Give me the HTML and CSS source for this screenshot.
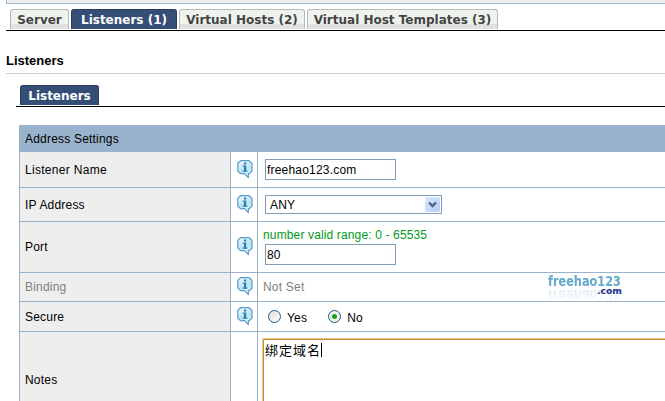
FILE: index.html
```
<!DOCTYPE html>
<html lang="en">
<head>
<meta charset="utf-8">
<title>Listeners</title>
<link rel="stylesheet" href="styles.css">
</head>
<body>
<svg class="defs" width="0" height="0">
  <defs>
    <linearGradient id="bubble" x1="0" y1="0" x2="0.3" y2="1">
      <stop offset="0" stop-color="#eefaff"/><stop offset="0.6" stop-color="#b9e3f7"/><stop offset="1" stop-color="#e3f6fe"/>
    </linearGradient>
    <symbol id="info" viewBox="0 0 16 19">
      <path d="M3.500 .7h8.500L15 3.500v7.500l-2.500 2.700h-1.200v4L7.500 13.700H3.500L.8 11V3.500z" fill="url(#bubble)" stroke="#5a9dc8" stroke-width="1.200" stroke-linejoin="round"/>
      <path d="M7 2.500h2.200v2H7zM5.800 5.600h3.400v5h1.200v1.200H5.600v-1.200H7v-3.800H5.800z" fill="#347eab"/>
    </symbol>
  </defs>
</svg>
<div class="topbox"></div>
<nav class="tabs">
  <a class="tab server"><span>Server</span></a>
  <a class="tab listeners active"><span>Listeners (1)</span></a>
  <a class="tab hosts"><span>Virtual Hosts (2)</span></a>
  <a class="tab templates"><span>Virtual Host Templates (3)</span></a>
</nav>
<h1>Listeners</h1>
<nav class="tabs subtabs"><a class="tab sub active"><span>Listeners</span></a></nav>
<main class="settings">
  <h2>Address Settings</h2>
  <div class="row name">
    <div class="label">Listener Name</div>
    <div class="help"><svg><use href="#info"/></svg></div>
    <div class="value"><div class="field">freehao123.com</div></div>
  </div>
  <div class="row address">
    <div class="label">IP Address</div>
    <div class="help"><svg><use href="#info"/></svg></div>
    <div class="value"><div class="field select"><span>ANY</span><i><svg viewBox="0 0 15 15"><path d="M4 5.500l3.500 3.500L11 5.500" fill="none" stroke="#4d6185" stroke-width="2.400"/></svg></i></div></div>
  </div>
  <div class="row port">
    <div class="label">Port</div>
    <div class="help"><svg><use href="#info"/></svg></div>
    <div class="value"><div class="hint">number valid range: 0 - 65535</div><div class="field">80</div></div>
  </div>
  <div class="row binding">
    <div class="label">Binding</div>
    <div class="help"><svg><use href="#info"/></svg></div>
    <div class="value">Not Set</div>
  </div>
  <div class="row secure">
    <div class="label">Secure</div>
    <div class="help"><svg><use href="#info"/></svg></div>
    <div class="value"><i class="radio"></i><span class="yes">Yes</span><i class="radio on"></i><span>No</span></div>
  </div>
  <div class="row notes">
    <div class="label">Notes</div>
    <div class="help"></div>
    <div class="value"><div class="area">绑定域名<i class="caret"></i></div></div>
  </div>
</main>
<div class="watermark">
  <svg class="brand" width="80" height="18"><text x="3" y="15" textLength="73" lengthAdjust="spacingAndGlyphs">freehao123</text></svg>
  <svg class="com" width="28" height="11"><text x="1" y="9" textLength="25" lengthAdjust="spacingAndGlyphs">.com</text></svg>
</div>
</body>
</html>
```
FILE: styles.css
```
* { box-sizing: border-box; }
html, body { margin: 0; height: 401px; }
body {
  position: relative;
  background: #fff;
  color: #000;
  font: 12px/16px "Liberation Sans", Arial, "Noto Sans CJK SC", sans-serif;
  letter-spacing: .2px;
}
.defs { display: block; }
.topbox {
  height: 4px;
  margin-left: 6px;
  background: #eee;
  border: solid #9ab3cd;
  border-width: 0 0 1px 1px;
}
.tabs {
  display: flex;
  gap: 2px;
  height: 22px;
  margin: 5px 0 0 6px;
  padding-left: 4px;
  border-bottom: 1px solid #000;
}
.tab {
  height: 20px;
  display: flex;
  justify-content: center;
  border: 1px solid #b9b9b9;
  border-bottom: 0;
  border-radius: 3px 3px 0 0;
  background: linear-gradient(#eff3ed 0, #eff3ed 14px, #dfe0df 14px, #e1e2e0 100%);
  color: #444;
  font: bold 12px/20px "DejaVu Sans", Verdana, sans-serif;
  letter-spacing: 0;
  white-space: nowrap;
}
.active { background: #344e75; border-color: #263d5e; color: #fff; }
.server { width: 59px; }
.listeners { width: 106px; }
.hosts { width: 126px; }
.templates { width: 191px; }
.sub { width: 79px; }
h1 {
  margin: 21px 0 0 6px;
  height: 22px;
  border-bottom: 1px solid #ccc;
  font-size: 13px;
  line-height: 17px;
  letter-spacing: 0;
}
.subtabs { margin: 11px 0 0 16px; }
.settings { margin: 18px 0 0 19px; border-left: 1px solid #9ab3cd; }
h2 {
  margin: 0;
  height: 27px;
  padding-left: 5px;
  background: #9ab3cd;
  font-size: 12px;
  font-weight: normal;
  line-height: 28px;
}
.row {
  display: grid;
  grid-template-columns: 210px 28px 1fr;
  border-bottom: 1px solid #9ab3cd;
}
.row > div { display: flex; align-items: center; }
.row > .label { background: #eee; padding-left: 5px; }
.row > .help { border: solid #9ab3cd; border-width: 0 1px; padding: 0 0 1px 6px; }
.row > .value { padding-left: 5px; }
.help svg { width: 16px; height: 19px; }
.name { height: 36px; }
.address { height: 34px; }
.port { height: 51px; }
.binding { height: 29px; color: #808080; }
.secure { height: 30px; }
.notes { height: 69px; border-bottom: 0; }
.row.notes > .label { padding-top: 27px; }
.name .label { letter-spacing: .3px; }
.field {
  width: 131px;
  height: 21px;
  margin-left: 2px;
  border: 1px solid #7f9db9;
  background: #fff;
  padding: 1px 0 0 1px;
  line-height: 19px;
}
.select {
  display: flex;
  justify-content: space-between;
  width: 177px;
  height: 19px;
  padding: 1px 1px 0 4px;
  line-height: 17px;
}
.select i {
  width: 15px;
  height: 15px;
  border-radius: 2px;
  background: linear-gradient(135deg, #dce9fd, #b3cbf5);
}
.select svg { display: block; }
.row.port > .value { flex-direction: column; align-items: flex-start; padding-top: 5px; }
.hint { color: #009a22; height: 17px; line-height: 16px; letter-spacing: .14px; }
.radio {
  width: 13px;
  height: 13px;
  border: 1px solid #245782;
  border-radius: 50%;
  background: linear-gradient(135deg, #dddcd7, #fff);
}
.radio.on { background: radial-gradient(circle, #21a121 0 2px, #f3f3ef 3px); }
.row.secure > .value { padding-left: 10px; }
.secure span { margin: 3px 0 0 6px; }
.secure .yes { margin-right: 21px; }
.row.notes > .value { align-items: flex-start; padding: 6px 0 0 4px; }
.area {
  display: flex;
  width: 100%;
  height: 63px;
  border: solid #f0c272;
  border-width: 1px 0 0 1px;
  border-top-left-radius: 2px;
  box-shadow: inset 1px 1px 0 #b8904d;
  padding: 3px 0 0 2px;
  font: 13px/16px "Noto Sans CJK SC", sans-serif;
  letter-spacing: 1px;
}
.caret { width: 1px; height: 14px; margin: 1px 0 0; background: #000; }
.watermark {
  position: absolute;
  left: 545px;
  top: 271px;
  width: 80px;
  height: 30px;
  letter-spacing: 0;
  font: bold 14px "DejaVu Sans", sans-serif;
}
.brand {
  display: block;
  fill: #62a9cd;
  -webkit-box-reflect: below -2px linear-gradient(transparent 10%, rgba(0, 0, 0, .25));
}
.com {
  position: absolute;
  left: 51px;
  top: 14px;
  fill: #1d2f86;
  font-size: 8.500px;
}
```
